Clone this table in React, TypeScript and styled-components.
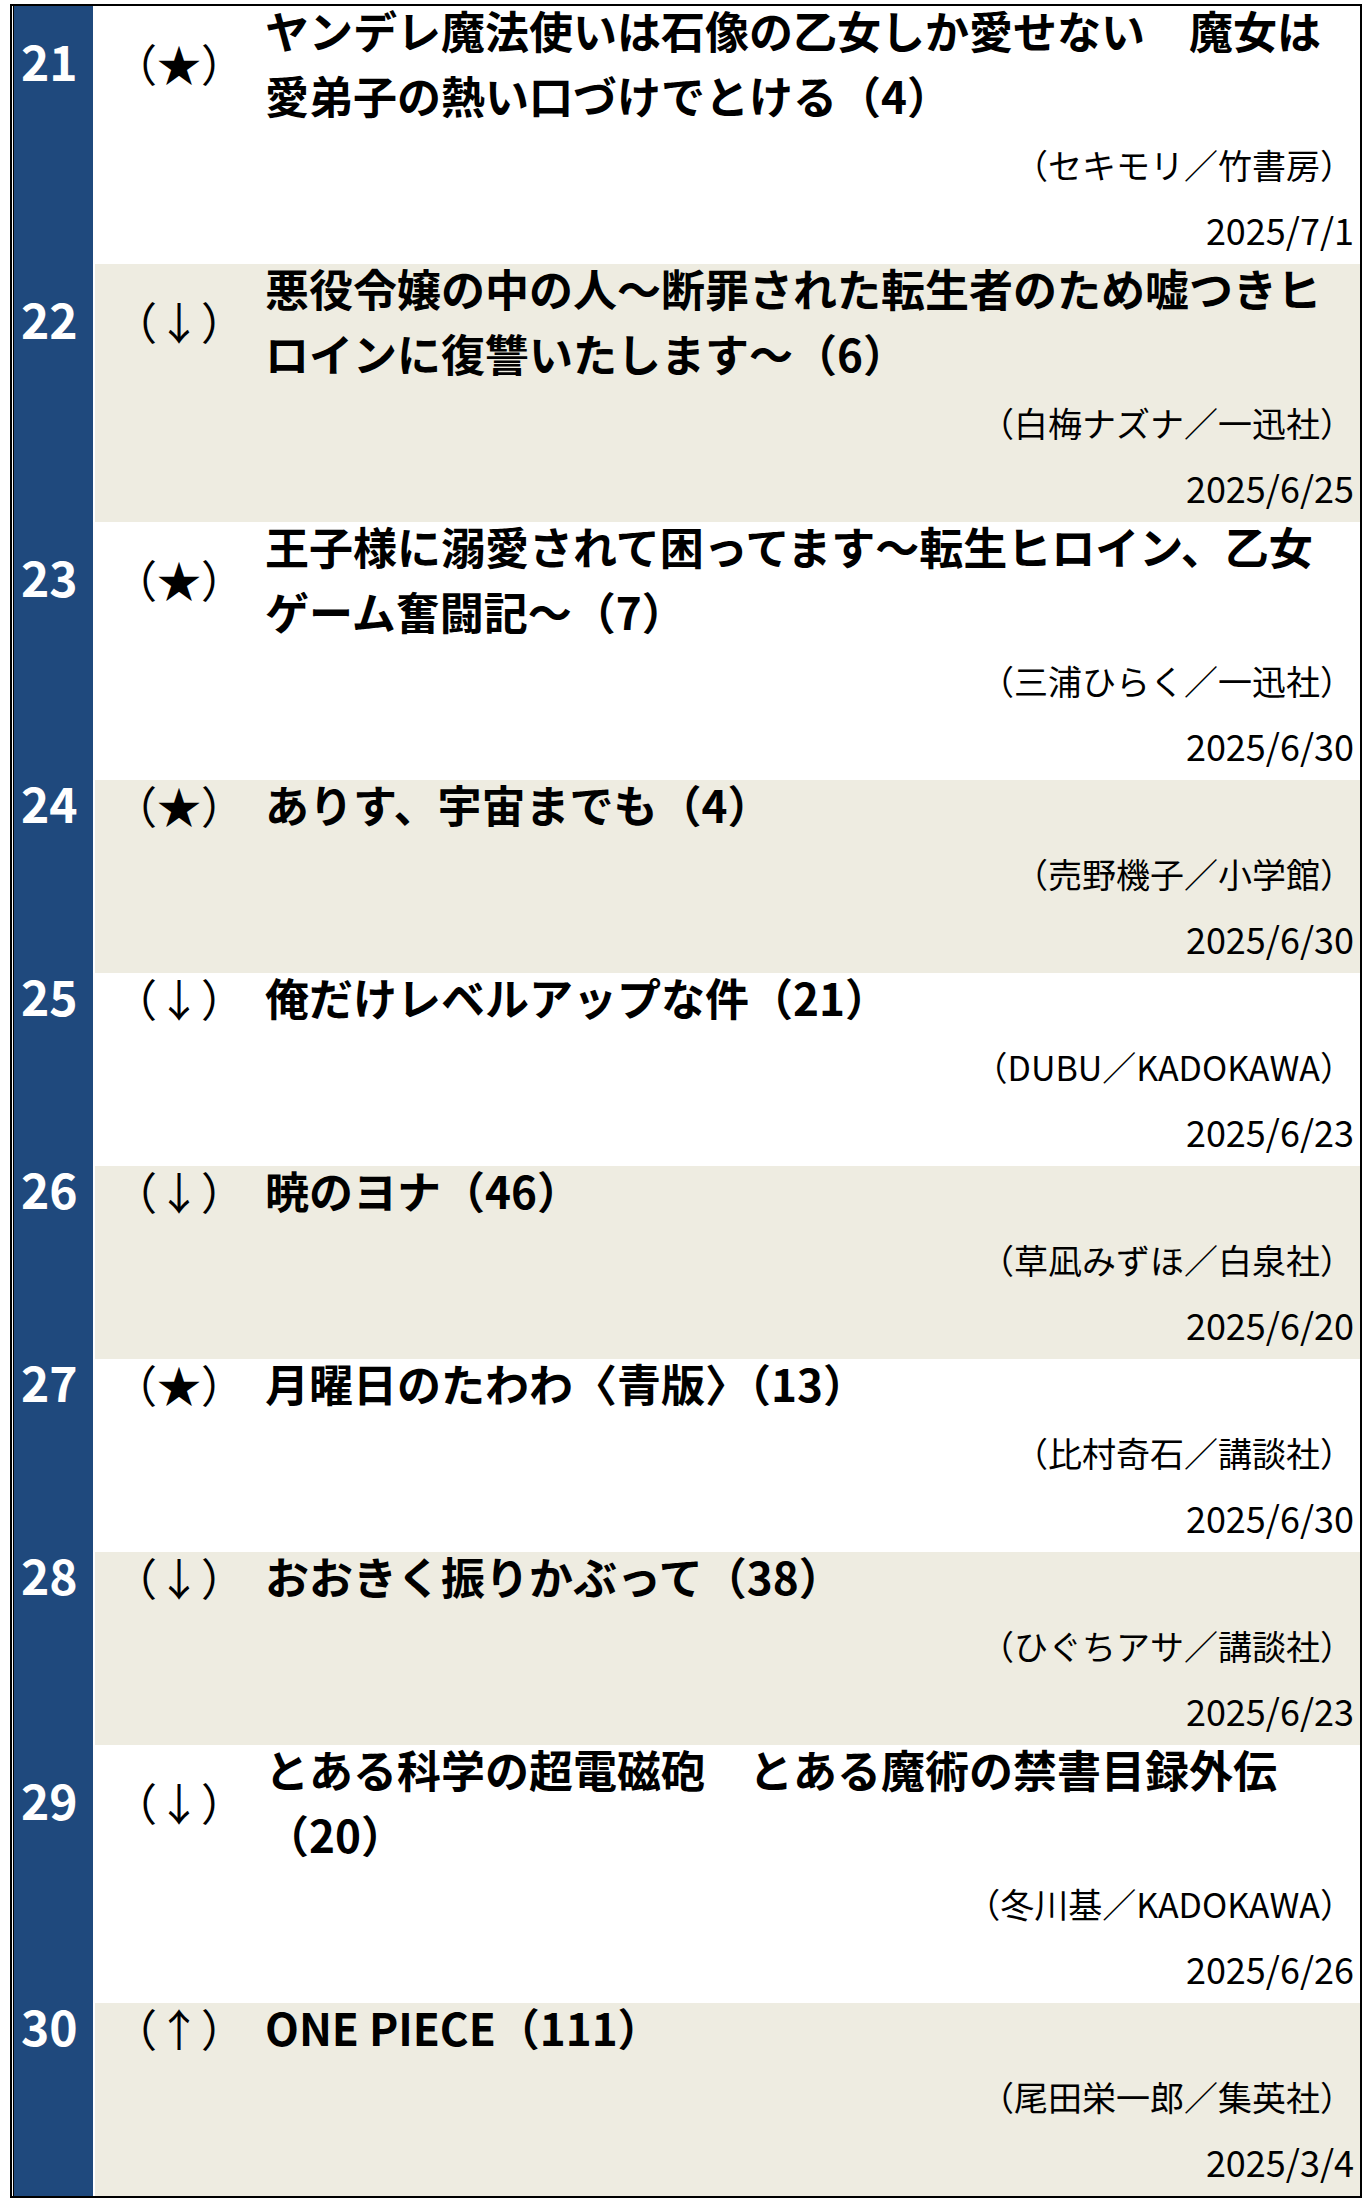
import styled, { createGlobalStyle } from "styled-components";

const GlobalStyle = createGlobalStyle`
  html, body {
    margin: 0;
    padding: 0;
    background: #fff;
  }
  body {
    font-family: "Noto Sans CJK JP", "Noto Sans", sans-serif;
    color: #000;
  }
`;

type Item = {
  rank: number;
  mark: string;
  title: string;
  author: string;
  date: string;
};

const items: Item[] = [
  {
    rank: 21,
    mark: "★",
    title: "ヤンデレ魔法使いは石像の乙女しか愛せない　魔女は愛弟子の熱い口づけでとける（4）",
    author: "（セキモリ／竹書房）",
    date: "2025/7/1",
  },
  {
    rank: 22,
    mark: "↓",
    title: "悪役令嬢の中の人～断罪された転生者のため嘘つきヒロインに復讐いたします～（6）",
    author: "（白梅ナズナ／一迅社）",
    date: "2025/6/25",
  },
  {
    rank: 23,
    mark: "★",
    title: "王子様に溺愛されて困ってます～転生ヒロイン、乙女ゲーム奮闘記～（7）",
    author: "（三浦ひらく／一迅社）",
    date: "2025/6/30",
  },
  {
    rank: 24,
    mark: "★",
    title: "ありす、宇宙までも（4）",
    author: "（売野機子／小学館）",
    date: "2025/6/30",
  },
  {
    rank: 25,
    mark: "↓",
    title: "俺だけレベルアップな件（21）",
    author: "（DUBU／KADOKAWA）",
    date: "2025/6/23",
  },
  {
    rank: 26,
    mark: "↓",
    title: "暁のヨナ（46）",
    author: "（草凪みずほ／白泉社）",
    date: "2025/6/20",
  },
  {
    rank: 27,
    mark: "★",
    title: "月曜日のたわわ〈青版〉（13）",
    author: "（比村奇石／講談社）",
    date: "2025/6/30",
  },
  {
    rank: 28,
    mark: "↓",
    title: "おおきく振りかぶって（38）",
    author: "（ひぐちアサ／講談社）",
    date: "2025/6/23",
  },
  {
    rank: 29,
    mark: "↓",
    title: "とある科学の超電磁砲　とある魔術の禁書目録外伝（20）",
    author: "（冬川基／KADOKAWA）",
    date: "2025/6/26",
  },
  {
    rank: 30,
    mark: "↑",
    title: "ONE PIECE（111）",
    author: "（尾田栄一郎／集英社）",
    date: "2025/3/4",
  },
];

function App() {
  return (
    <>
      <GlobalStyle />
      <Table>
        {items.map((item, i) => (
          <Row key={item.rank}>
            <RankBar />
            <RankNum>{item.rank}</RankNum>
            <Body $alt={i % 2 === 1} />
            <Mark>（{item.mark}）</Mark>
            <Title>{item.title}</Title>
            <Author>{item.author}</Author>
            <DateLine>{item.date}</DateLine>
          </Row>
        ))}
      </Table>
    </>
  );
}
export default App;

const Table = styled.div`
  box-sizing: border-box;
  width: 1352px;
  margin: 4px 0 0 10px;
  border: 2px solid #000;
  background: #fff;
`;

const Row = styled.div`
  display: grid;
  grid-template-columns: 83px 170px 1fr;
  grid-template-rows: auto 64px 64px;
`;

const RankBar = styled.div`
  grid-column: 1;
  grid-row: 1 / -1;
  margin-left: 1px;
  margin-right: 2px;
  border-left: 1px solid #000;
  background: #1f497d;
`;

/* nudged up by margins so it lines up with the title block like the source table */
const RankNum = styled.div`
  grid-column: 1;
  grid-row: 1;
  align-self: center;
  margin: -11px 0 11px;
  padding-left: 9px;
  color: #fff;
  font-weight: 700;
  font-size: 48px;
  line-height: 1;
`;

const Body = styled.div<{ $alt: boolean }>`
  grid-column: 2 / 4;
  grid-row: 1 / -1;
  background: ${(p) => (p.$alt ? "#eeece1" : "#fff")};
`;

const Mark = styled.div`
  grid-column: 2;
  grid-row: 1;
  align-self: center;
  margin: -8px 0 8px;
  padding-left: 18px;
  font-size: 44px;
  line-height: 1;
  white-space: nowrap;
`;

const Title = styled.div`
  grid-column: 3;
  grid-row: 1;
  margin-top: -8px;
  padding: 0 10px 8px 0;
  font-size: 44px;
  font-weight: 700;
  line-height: 65px;
`;

const Author = styled.div`
  grid-column: 2 / 4;
  grid-row: 2;
  align-self: center;
  padding: 0 6px 6px 0;
  text-align: right;
  font-size: 34px;
  line-height: 1;
`;

const DateLine = styled.div`
  grid-column: 2 / 4;
  grid-row: 3;
  align-self: center;
  padding: 0 6px 6px 0;
  text-align: right;
  font-size: 36px;
  line-height: 1;
`;
